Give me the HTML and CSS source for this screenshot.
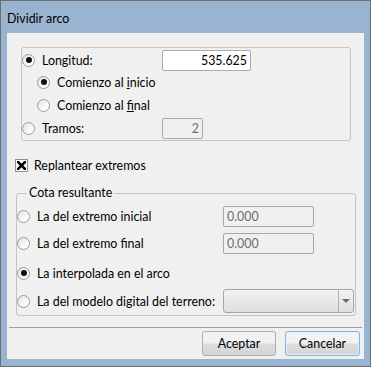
FILE: index.html
```html
<!DOCTYPE html>
<html lang="es">
<head>
    <meta charset="UTF-8">
    <title>Dividir arco</title>
    <link rel="stylesheet" href="styles.css">
</head>
<body>
    <div class="window">
        <div class="titlebar">Dividir arco</div>
        <div class="client">

            <div class="group group-mode">
                <div class="row">
                    <label class="opt opt-main"><span class="radio checked"></span><span>Longitud:</span></label>
                    <span class="field field-long">535.625</span>
                </div>
                <div class="row row-sub">
                    <label class="opt"><span class="radio checked"></span><span>Comienzo al <u>i</u>nicio</span></label>
                </div>
                <div class="row row-sub gap">
                    <label class="opt"><span class="radio"></span><span>Comienzo al <u>f</u>inal</span></label>
                </div>
                <div class="row gap">
                    <label class="opt opt-main"><span class="radio"></span><span>Tramos:</span></label>
                    <span class="field field-short disabled">2</span>
                </div>
            </div>

            <label class="check-row">
                <span class="checkbox">
                    <svg width="9" height="9" viewBox="0 0 9 9"><path d="M1 1 L8 8 M8 1 L1 8" stroke="#000" stroke-width="2.6" stroke-linecap="square"/></svg>
                </span>
                <span>Replantear extremos</span>
            </label>

            <div class="group group-cota">
                <div class="legend">Cota resultante</div>
                <div class="row r1">
                    <label class="opt opt-cota"><span class="radio"></span><span>La del extremo inicial</span></label>
                    <span class="field field-cota disabled">0.000</span>
                </div>
                <div class="row r2">
                    <label class="opt opt-cota"><span class="radio"></span><span>La del extremo final</span></label>
                    <span class="field field-cota disabled">0.000</span>
                </div>
                <div class="row r3">
                    <label class="opt opt-cota"><span class="radio checked"></span><span>La interpolada en el arco</span></label>
                </div>
                <div class="row r4">
                    <label class="opt opt-cota"><span class="radio"></span><span>La del modelo digital del terreno:</span></label>
                    <span class="combo">
                        <span class="combo-text"></span>
                        <span class="combo-arrow"></span>
                    </span>
                </div>
            </div>

            <div class="separator"></div>

            <div class="buttons">
                <button class="btn">Aceptar</button>
                <button class="btn btn-default">Cancelar</button>
            </div>

        </div>
    </div>
</body>
</html>
```

FILE: styles.css
```css
* {
    box-sizing: border-box;
}

body {
    margin: 0;
    font-family: Lato, "Noto Sans", Arial, sans-serif;
    font-size: 12.4px;
    color: #000;
}

.window {
    width: 371px;
    height: 367px;
    border: 1px solid #6e6e6e;
    background-color: #99b4d1; /* caption blue */
    padding: 0 6px 7px;
    display: flex;
    flex-direction: column;
}

.titlebar {
    height: 32px;
    padding-top: 2px;
    display: flex;
    align-items: center;
}

.client {
    flex: 1;
    background-color: #f0f0f0;
    display: flex;
    flex-direction: column;
}

/* Group boxes */
.group {
    border: 1px solid #c4c4c4;
    border-radius: 3px;
}

.group-mode {
    margin: 14px 13px 0 14px;
    padding: 1px 0;
}

.group-cota {
    margin: 20px 8px 0 9px;
    padding-bottom: 2px;
}

.legend {
    margin: -9px 0 0 10px;
    padding: 0 2px;
    width: fit-content;
    line-height: 16px;
    background-color: #f0f0f0;
}

.row {
    height: 22px;
    display: flex;
    align-items: center;
}

.row.gap { margin-top: 1px; }
.row-sub { padding-left: 15px; }

.group-cota .r1 { margin-top: 4px; }
.group-cota .r2 { margin-top: 5px; }
.group-cota .r3 { margin-top: 8px; }
.group-cota .r4 { margin-top: 5px; height: 24px; }

.opt {
    display: flex;
    align-items: center;
    white-space: nowrap;
}

.opt-main { width: 140px; }
.opt-cota { width: 206px; }

/* Radio buttons */
.radio {
    width: 13px;
    height: 13px;
    margin-right: 7px;
    border: 1px solid #9a9a9a;
    border-radius: 50%;
    background: linear-gradient(135deg, #e0e0e0, #fdfdfd 70%);
    display: flex;
    align-items: center;
    justify-content: center;
    flex-shrink: 0;
}

.radio.checked::after {
    content: "";
    width: 6px;
    height: 6px;
    border-radius: 50%;
    background-color: #111;
}

/* Checkbox */
.check-row {
    height: 16px;
    margin: 16px 0 0 8px;
    display: flex;
    align-items: center;
}

.checkbox {
    width: 13px;
    height: 13px;
    margin-right: 6px;
    border: 1px solid #8e8f8f;
    background-color: #fff;
    display: flex;
    align-items: center;
    justify-content: center;
}

.checkbox svg { display: block; }

/* Text fields */
.field {
    height: 21px;
    padding: 0 3px;
    border: 1px solid #abadb3;
    border-radius: 2px;
    background-color: #fff;
    display: flex;
    align-items: center;
}

.field-long { width: 89px; justify-content: flex-end; }
.field-short { width: 41px; justify-content: flex-end; }
.field-cota { width: 91px; }

.field.disabled {
    background-color: #f0f0f0;
    border-color: #a8a8a8;
    color: #6d6d6d;
}

/* Combo box */
.combo {
    width: 131px;
    height: 24px;
    border: 1px solid #a6a6a6;
    border-radius: 3px;
    background: linear-gradient(#f3f3f3, #dedede);
    display: flex;
}

.combo-text { flex: 1; }

.combo-arrow {
    width: 15px;
    border-left: 1px solid #b0b0b0;
    display: flex;
    align-items: center;
    justify-content: center;
}

.combo-arrow::after {
    content: "";
    border-left: 4px solid transparent;
    border-right: 4px solid transparent;
    border-top: 4px solid #6a6a6a;
}

.separator {
    height: 1px;
    margin: 11px 2px 0 2px;
    background-color: #a0a0a0;
}

/* Buttons */
.buttons {
    margin: 3px 4px 0 0;
    display: flex;
    justify-content: flex-end;
    gap: 9px;
}

.btn {
    width: 74px;
    height: 25px;
    font-family: inherit;
    font-size: 12.4px;
    color: #000;
    border: 1px solid #acacac;
    border-radius: 3px;
    background: linear-gradient(#f2f2f2 45%, #dcdcdc 55%, #d5d5d5);
    padding: 0;
}

.btn-default {
    width: 75px;
    border-color: #7eb4ea;
    box-shadow: inset 0 0 0 1px #e5f1fb;
}
```
